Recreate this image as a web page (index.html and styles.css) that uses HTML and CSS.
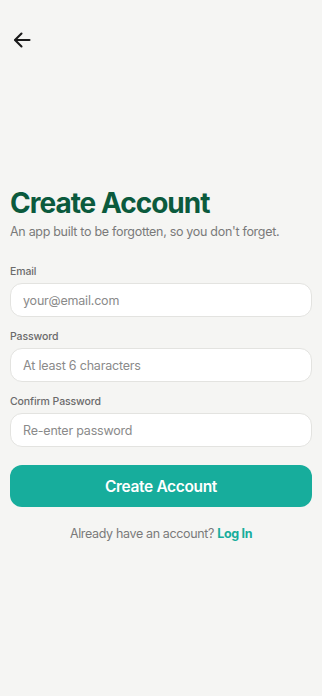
FILE: index.html
```html
<!DOCTYPE html>
<html>
<head>
<meta charset="utf-8">
<link rel="stylesheet" href="styles.css">
</head>
<body>
<div class="screen">
  <div class="topbar">
    <button class="back" aria-label="Back">
      <svg width="20" height="20" viewBox="0 0 20 20" fill="none" stroke="#1a1a1a" stroke-width="2.1" stroke-linecap="round" stroke-linejoin="round">
        <path d="M17.5 10H3.5"/>
        <path d="M9.5 3.5L3 10l6.5 6.5"/>
      </svg>
    </button>
  </div>
  <div class="content">
    <h1 class="title">Create Account</h1>
    <p class="subtitle">An app built to be forgotten, so you don't forget.</p>
    <div class="field first">
      <label class="label">Email</label>
      <input class="input" type="text" placeholder="your@email.com">
    </div>
    <div class="field">
      <label class="label">Password</label>
      <input class="input" type="password" placeholder="At least 6 characters">
    </div>
    <div class="field">
      <label class="label">Confirm Password</label>
      <input class="input" type="password" placeholder="Re-enter password">
    </div>
    <button class="primary">Create Account</button>
    <p class="footer">Already have an account? <a class="link">Log In</a></p>
  </div>
</div>
</body>
</html>
```
FILE: styles.css
```css
html, body {
  margin: 0;
  padding: 0;
  background: #f5f5f3;
}
body {
  font-family: Inter, "Noto Sans", sans-serif;
  width: 322px;
  height: 696px;
  overflow: hidden;
}
.screen {
  padding: 0 10px;
}
.topbar {
  height: 80px;
  display: flex;
  align-items: flex-start;
  padding-top: 30px;
  box-sizing: border-box;
}
.back {
  background: none;
  border: none;
  padding: 0;
  margin-left: 2px;
  width: 20px;
  height: 20px;
  display: flex;
}
.content {
  padding-top: 106px;
}
.title {
  margin: 0;
  font-size: 28px;
  font-weight: 700;
  color: #0b5a3d;
  line-height: 34px;
  letter-spacing: -1px;
}
.subtitle {
  margin: 3px 0 0;
  font-size: 12.5px;
  color: #7a7a7a;
  line-height: 18px;
  letter-spacing: -0.3px;
}
.field {
  display: flex;
  flex-direction: column;
}
.field.first { margin-top: 24px; }
.label {
  font-size: 10.5px;
  font-weight: 500;
  color: #6b6b6b;
  line-height: 14px;
  margin-top: 13px;
  margin-bottom: 4px;
  letter-spacing: -0.1px;
}
.field.first .label { margin-top: 0; }
.input {
  height: 34px;
  box-sizing: border-box;
  border: 1px solid #e3e3e0;
  border-radius: 12px;
  background: #fff;
  padding: 0 12px;
  font-family: inherit;
  font-size: 12.5px;
  color: #333;
  outline: none;
  letter-spacing: -0.2px;
}
.input::placeholder { color: #8a8a8a; }
.primary {
  margin-top: 18px;
  width: 100%;
  height: 42px;
  border: none;
  border-radius: 12px;
  background: #17ad9c;
  color: #fff;
  font-family: inherit;
  font-size: 15.5px;
  font-weight: 600;
  letter-spacing: -0.35px;
}
.footer {
  margin: 18px 0 0;
  text-align: center;
  font-size: 12.5px;
  color: #7a7a7a;
  line-height: 18px;
  letter-spacing: -0.35px;
}
.link {
  color: #17ad9c;
  font-weight: 700;
}
```
